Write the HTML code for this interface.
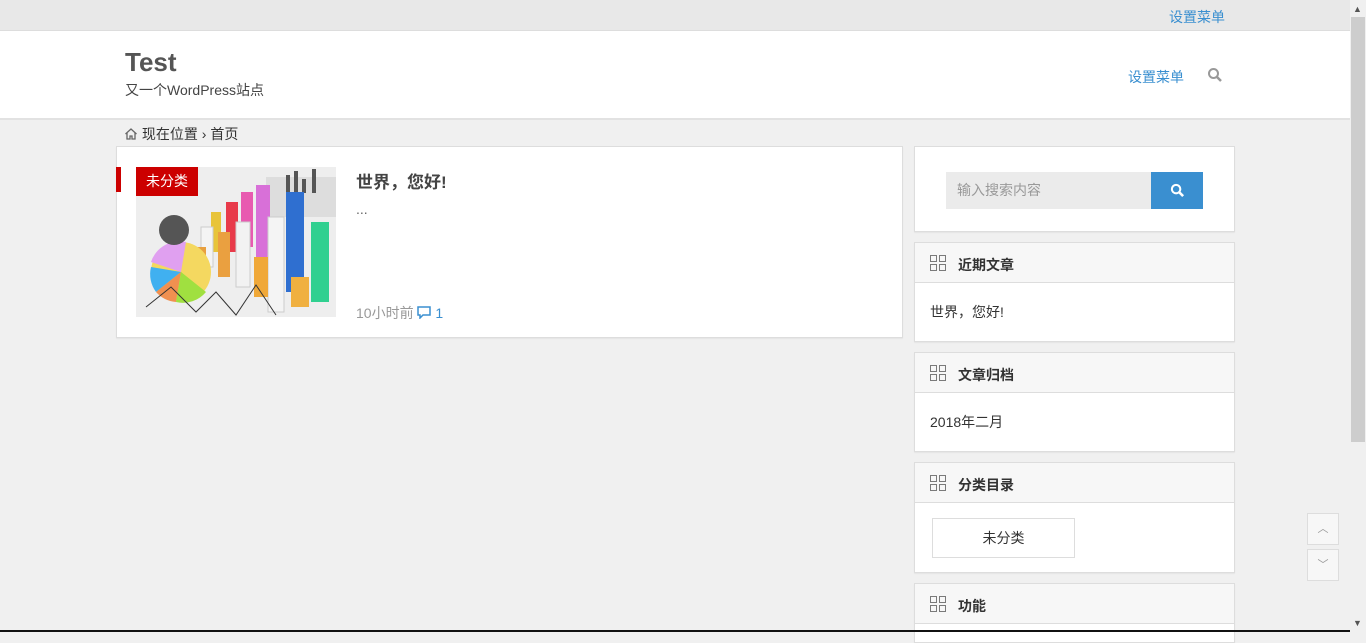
<!DOCTYPE html>
<html><head><meta charset="utf-8"><style>
*{margin:0;padding:0;box-sizing:border-box}
body{width:1366px;height:632px;overflow:hidden;background:#f0f0f0;font-family:"Liberation Sans","Noto Sans CJK SC",sans-serif;font-size:14px;color:#333;position:relative}
.top{position:absolute;left:0;top:0;width:1350px;height:31px;background:#e8e8e8;border-bottom:1px solid #ddd}
.top a{position:absolute;left:1169px;top:7px;color:#3a8fd0;font-size:14px}
.hdr{position:absolute;left:0;top:31px;width:1350px;height:89px;background:#fff;border-bottom:2px solid #e2e2e2}
.logo{position:absolute;left:125px;top:16px;font-size:26px;font-weight:bold;color:#555}
.desc{position:absolute;left:125px;top:49px;font-size:14px;color:#444}
.nav{position:absolute;left:1128px;top:36px;color:#3a8fd0}
.crumb{position:absolute;left:124px;top:124px;font-size:14px;color:#333}
.card{position:absolute;background:#fff;border:1px solid #ddd;box-shadow:0 1px 1px rgba(0,0,0,.05)}
.wh{height:40px;background:#f7f7f7;border-bottom:1px solid #ddd;position:relative}
.wh b{position:absolute;left:43px;top:12px;font-size:14px;color:#333}
.ic{position:absolute;left:15px;top:12px;width:16px;height:16px}
.ic i{position:absolute;width:7px;height:7px;border:1.5px solid #7a7a7a}
.wb{padding:19px 15px;font-size:14px;color:#333}
.sb{position:absolute;left:1350px;top:0;width:16px;height:632px;background:#f0f0f0}
.th{position:absolute;left:1351px;top:17px;width:14px;height:425px;background:#cdcdcd}
.btn{position:absolute;left:1307px;width:32px;height:32px;background:#f7f7f7;border:1px solid #ddd;color:#999;text-align:center;font-size:11px;line-height:30px}
</style></head><body>
<div class="top"><a>设置菜单</a></div>
<div class="hdr"><div class="logo">Test</div><div class="desc">又一个WordPress站点</div><div class="nav">设置菜单</div>
<svg style="position:absolute;left:1207px;top:36px" width="16" height="16" viewBox="0 0 16 16"><circle cx="6.5" cy="6.5" r="4.5" fill="none" stroke="#999" stroke-width="2"/><path d="M10 10l4 4" stroke="#999" stroke-width="2.5"/></svg></div>
<div class="crumb"><svg width="14" height="14" viewBox="0 0 14 14" style="vertical-align:-2px"><path d="M1.5 7L7 2l5.5 5M3 6v6h3V9h2v3h3V6" fill="none" stroke="#666" stroke-width="1.3"/></svg> 现在位置 › 首页</div>
<div class="card" style="left:116px;top:146px;width:787px;height:192px">
<div style="position:absolute;left:-1px;top:20px;width:5px;height:25px;background:#c00"></div>
<svg style="position:absolute;left:19px;top:20px" width="200" height="150" viewBox="0 0 200 150">
<rect width="200" height="150" fill="#eeeeee"/>
<rect x="130" y="10" width="70" height="40" fill="#ddd"/>
<g fill="#555"><rect x="150" y="8" width="4" height="18"/><rect x="158" y="4" width="4" height="22"/><rect x="166" y="12" width="4" height="14"/><rect x="176" y="2" width="4" height="24"/></g>
<rect x="75" y="45" width="10" height="40" fill="#e8c43a"/><rect x="90" y="35" width="12" height="50" fill="#e83a4a"/><rect x="105" y="25" width="12" height="55" fill="#e85ab0"/><rect x="120" y="18" width="14" height="90" fill="#d870d8"/>
<rect x="100" y="55" width="14" height="65" fill="#f2f2f2" stroke="#ccc"/><rect x="82" y="65" width="12" height="45" fill="#eaa040"/><rect x="65" y="60" width="12" height="40" fill="#f4f4f4" stroke="#ccc"/>
<rect x="150" y="25" width="18" height="100" fill="#2f6fd0"/><rect x="132" y="50" width="16" height="95" fill="#f4f4f4" stroke="#ccc"/><rect x="175" y="55" width="18" height="80" fill="#30d090"/>
<rect x="118" y="90" width="14" height="40" fill="#f0a838"/><rect x="155" y="110" width="18" height="30" fill="#f0b040"/><rect x="60" y="80" width="10" height="20" fill="#e8a040"/>
<circle cx="45" cy="105" r="30" fill="#f4d860"/><path d="M45 105L15 95A30 30 0 0 1 50 75Z" fill="#e0a0f0"/><path d="M45 105L20 125A30 30 0 0 1 15 100Z" fill="#40b0f0"/><path d="M45 105L40 135A30 30 0 0 1 20 125Z" fill="#f09050"/><path d="M45 105L70 125A30 30 0 0 1 40 135Z" fill="#a0e040"/>
<circle cx="38" cy="63" r="15" fill="#555"/><polyline points="10,140 35,120 60,145 80,125 100,148 120,118 140,148" fill="none" stroke="#333"/>
</svg>
<div style="position:absolute;left:19px;top:20px;width:62px;height:29px;background:#c00;color:#fff;font-size:14px;line-height:29px;text-align:center">未分类</div>
<div style="position:absolute;left:239px;top:21px;font-size:17px;font-weight:bold;color:#444">世界，您好!</div>
<div style="position:absolute;left:239px;top:54px;color:#666">...</div>
<div style="position:absolute;left:239px;top:156px;color:#999">10小时前 <svg width="14" height="13" viewBox="0 0 14 13" style="vertical-align:-1px"><path d="M1 1h12v8H6l-3 3V9H1z" fill="none" stroke="#3a8fd0" stroke-width="1.5"/></svg> <span style="color:#3a8fd0">1</span></div>
</div>
<div class="card" style="left:914px;top:146px;width:321px;height:86px">
<div style="position:absolute;left:31px;top:25px;width:206px;height:37px;background:#ebebeb;color:#999;line-height:37px;padding-left:11px">输入搜索内容</div>
<div style="position:absolute;left:236px;top:25px;width:52px;height:37px;background:#3a8fd0"><svg style="position:absolute;left:19px;top:11px" width="15" height="15" viewBox="0 0 16 16"><circle cx="6.5" cy="6.5" r="4.5" fill="none" stroke="#fff" stroke-width="2.2"/><path d="M10 10l4 4" stroke="#fff" stroke-width="2.8"/></svg></div>
</div>
<div class="card" style="left:914px;top:242px;width:321px;height:100px"><div class="wh"><span class="ic"><i style="left:0;top:0"></i><i style="left:9px;top:0"></i><i style="left:0;top:9px"></i><i style="left:9px;top:9px"></i></span><b>近期文章</b></div><div class="wb">世界，您好!</div></div>
<div class="card" style="left:914px;top:352px;width:321px;height:100px"><div class="wh"><span class="ic"><i style="left:0;top:0"></i><i style="left:9px;top:0"></i><i style="left:0;top:9px"></i><i style="left:9px;top:9px"></i></span><b>文章归档</b></div><div class="wb">2018年二月</div></div>
<div class="card" style="left:914px;top:462px;width:321px;height:111px"><div class="wh"><span class="ic"><i style="left:0;top:0"></i><i style="left:9px;top:0"></i><i style="left:0;top:9px"></i><i style="left:9px;top:9px"></i></span><b>分类目录</b></div>
<div style="position:absolute;left:17px;top:55px;width:143px;height:40px;border:1px solid #ddd;text-align:center;line-height:38px">未分类</div></div>
<div class="card" style="left:914px;top:583px;width:321px;height:60px"><div class="wh"><span class="ic"><i style="left:0;top:0"></i><i style="left:9px;top:0"></i><i style="left:0;top:9px"></i><i style="left:9px;top:9px"></i></span><b>功能</b></div></div>
<div class="btn" style="top:513px">︿</div><div class="btn" style="top:549px">﹀</div>
<div class="sb"></div><div class="th"></div>
<div style="position:absolute;left:1353px;top:4px;font-size:9px;color:#555">▲</div>
<div style="position:absolute;left:1353px;top:618px;font-size:9px;color:#555">▼</div>
<div style="position:absolute;left:0;top:630px;width:1350px;height:2px;background:#111"></div>
</body></html>
